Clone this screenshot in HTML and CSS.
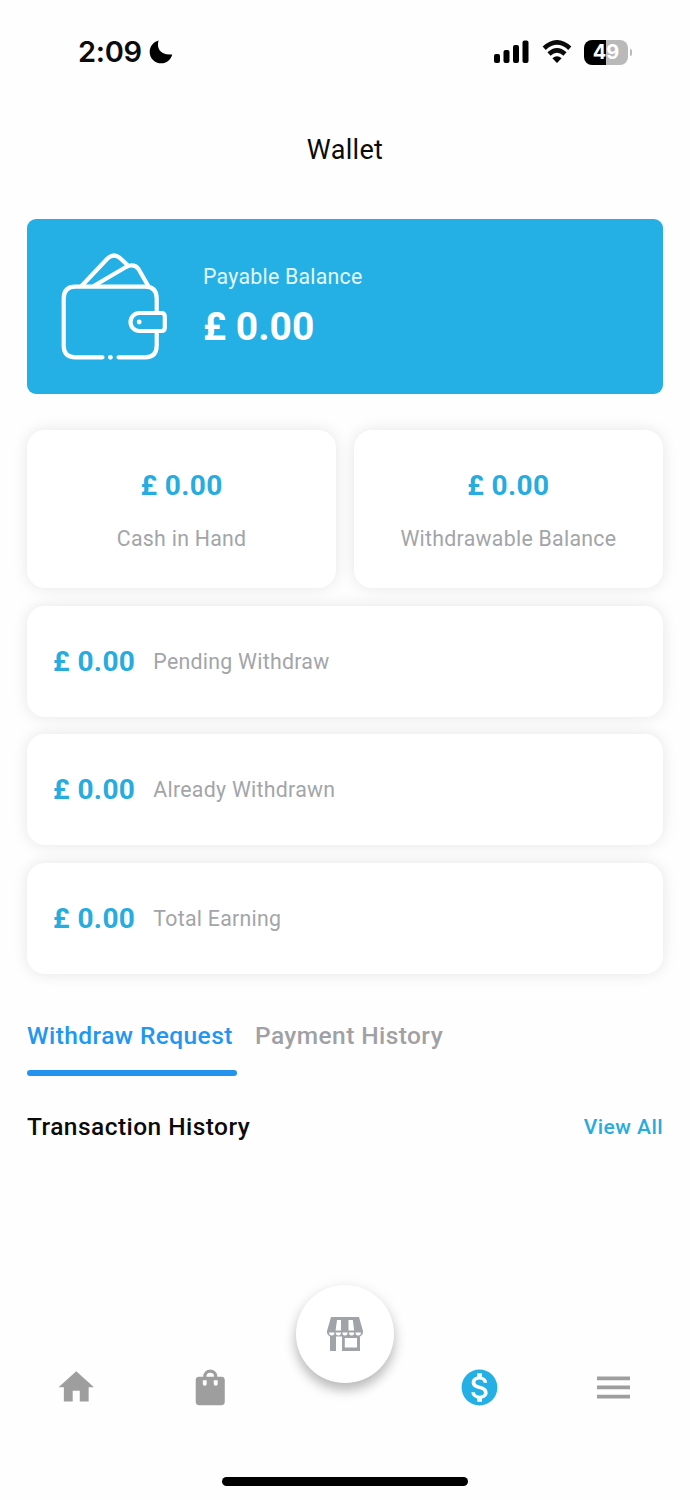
FILE: index.html
```html
<!DOCTYPE html>
<html lang="en">
<head>
<meta charset="utf-8">
<title>Wallet</title>
<link rel="stylesheet" href="styles.css">
</head>
<body>
<div class="screen">
  <header class="status">
    <div class="status-left">
      <span class="clock">2:09</span>
      <svg class="moon" viewBox="0 0 24 24" width="24" height="24"><path d="M9.600.6C7.400 7.600 10.500 15.600 23.300 14.500C21.600 20 17.500 23.300 12.400 23.300C5.800 23.300.7 18.200.7 11.900C.7 6.500 4.300 2 9.600.6z"/></svg>
    </div>
    <div class="status-right">
      <svg width="35" height="24" viewBox="0 0 35 24"><rect x="0" y="14" width="6" height="9" rx="2"/><rect x="9.500" y="10" width="6" height="13" rx="2"/><rect x="19" y="5" width="6" height="18" rx="2"/><rect x="28.500" y="0.500" width="6" height="22.500" rx="2"/></svg>
      <svg class="wifi" width="30" height="24" viewBox="0 0 30 24"><path d="M2.200 8.200Q15-3.400 27.800 8.200" class="arc"/><path d="M7 14Q15 6.600 23 14" class="arc"/><path d="M10.400 18.300Q15 14.400 19.600 18.300L15 23z"/></svg>
      <div class="battery"><span>49</span></div>
      <i class="nub"></i>
    </div>
  </header>

  <h1 class="title">Wallet</h1>

  <main class="content">
    <section class="hero">
      <svg class="wallet" width="110" height="114" viewBox="60 250 110 114">
        <path d="M102.500 357.300H75.500Q63.700 357.300 63.700 345.500V298.500Q63.700 286.700 75.500 286.700H145Q156.700 286.700 156.700 298.500V313M156.700 331V345.500Q156.700 357.300 145 357.300H118.500"/>
        <path d="M82 285.500L107.500 258.500Q114 252.500 120.500 258.500L127.500 265M94.500 285.500L126 267Q134 263 138.500 269L148 285.500"/>
        <path d="M139.500 313H161.500Q164.800 313 164.800 316.500V327.500Q164.800 331 161.500 331H139.500A9 9 0 0 1 139.500 313z"/>
        <circle cx="139.200" cy="322" r="2.400"/><circle cx="110.400" cy="357.300" r="2.400"/>
      </svg>
      <div class="hero-text">
        <div class="hero-label">Payable Balance</div>
        <div class="hero-value">£ 0.00</div>
      </div>
    </section>

    <section class="cards">
      <div class="card tile"><b class="amount">£ 0.00</b><span class="label">Cash in Hand</span></div>
      <div class="card tile"><b class="amount">£ 0.00</b><span class="label">Withdrawable Balance</span></div>
      <div class="card row"><b class="amount">£ 0.00</b><span class="label">Pending Withdraw</span></div>
      <div class="card row"><b class="amount">£ 0.00</b><span class="label">Already Withdrawn</span></div>
      <div class="card row"><b class="amount">£ 0.00</b><span class="label">Total Earning</span></div>
    </section>

    <nav class="tabs">
      <span class="tab active">Withdraw Request</span>
      <span class="tab">Payment History</span>
    </nav>

    <div class="history">
      <h2 class="history-title">Transaction History</h2>
      <a class="view-all">View All</a>
    </div>
  </main>

  <nav class="bottom">
    <div class="item"><svg width="42.500" height="42.500" viewBox="0 0 24 24"><path d="M10 20v-6h4v6h5v-8h3L12 3 2 12h3v8z"/></svg></div>
    <div class="item"><svg width="42.500" height="42.500" viewBox="0 0 24 24"><path fill-rule="evenodd" d="M5.700 6H8A4 4 0 0 1 16 6H18.300Q20.200 6 20.200 7.900V20.200Q20.200 22.100 18.300 22.100H5.700Q3.800 22.100 3.800 20.200V7.900Q3.800 6 5.700 6zM9.800 6H14.200A2.200 2.200 0 0 0 9.800 6zM7.800 8V10.200Q7.800 11.200 8.900 11.200T10 10.200V8zM14 8V10.200Q14 11.200 15.100 11.200T16.200 10.200V8z"/></svg></div>
    <div class="item"><div class="fab"><svg width="36" height="36" viewBox="0 0 36 36">
      <path fill-rule="evenodd" d="M4 1H32L36 15V17Q35 20 33 20.500V35H15V20.500H9V35H3V20.500Q1 20 0 17V15zM10 4L8.600 14.500H14V4zM21.500 4V14.500H27.200L25.800 4zM17.800 22V31.500H30V22z"/>
      <path class="scallop" d="M2 16.500H7.500Q7.500 19.500 4.800 19.500T2 16.500zM8.800 16.500H14Q14 19.500 11.400 19.500T8.800 16.500zM15.400 16.500H20.600Q20.600 19.500 18 19.500T15.400 16.500zM22 16.500H27.200Q27.200 19.500 24.600 19.500T22 16.500zM28.500 16.500H34Q34 19.500 31.200 19.500T28.500 16.500z"/></svg></div></div>
    <div class="item current"><svg width="43" height="43" viewBox="0 0 24 24"><path d="M12 2C6.480 2 2 6.480 2 12s4.480 10 10 10 10-4.480 10-10S17.520 2 12 2zm1.410 16.090V20h-2.670v-1.930c-1.710-.36-3.160-1.460-3.270-3.400h1.960c.1 1.050.82 1.870 2.650 1.870 1.960 0 2.400-.98 2.400-1.590 0-.83-.44-1.610-2.670-2.140-2.480-.6-4.180-1.620-4.180-3.670 0-1.720 1.390-2.840 3.110-3.210V4h2.670v1.950c1.860.45 2.790 1.860 2.850 3.390H14.300c-.05-1.110-.64-1.870-2.220-1.870-1.500 0-2.400.68-2.400 1.640 0 .84.65 1.390 2.670 1.910s4.180 1.390 4.180 3.910c-.01 1.830-1.380 2.830-3.120 3.160z"/></svg></div>
    <div class="item"><svg width="33" height="23" viewBox="0 0 33 23"><path d="M0 .5h33v3.700H0zM0 9.600h33v3.700H0zM0 18.700h33v3.700H0z"/></svg></div>
  </nav>
  <div class="home-bar"></div>
</div>
</body>
</html>
```
FILE: styles.css
```css
* { box-sizing: border-box; }
body { margin: 0; background: #fefefe; font-family: Roboto, "Liberation Sans", sans-serif; color: #0b0b0b; }
svg { display: block; flex: none; }
.screen { width: 690px; height: 1500px; display: flex; flex-direction: column; overflow: hidden; }

.status { height: 104px; padding: 0 58px 0 78px; display: flex; align-items: center; justify-content: space-between; }
.status-left, .status-right { display: flex; align-items: center; }
.status-left { gap: 7px; }
.clock { font: 600 29px/38px Inter, sans-serif; letter-spacing: -0.3px; }
.wifi { margin: 0 12px 0 13px; }
.arc { fill: none; stroke: #0b0b0b; stroke-width: 4.6; }
.battery { width: 44px; height: 25px; border-radius: 8px; background: linear-gradient(90deg, #000 50%, #b9b9b9 50%); color: #fff; text-align: center; font: 700 20px/25px Inter, sans-serif; }
.nub { width: 2px; height: 7px; margin-left: 2px; border-radius: 0 3px 3px 0; background: #b9b9b9; }

.title { margin: 0; height: 90px; font-size: 27px; font-weight: 400; line-height: 92px; text-align: center; letter-spacing: 0.3px; }
.content { padding: 25px 27px 0; }

.hero { height: 175px; padding-left: 33px; display: flex; align-items: center; gap: 33px; border-radius: 9px; background: #24b0e5; color: #fff; }
.wallet { fill: none; stroke: #fff; stroke-width: 4.2; stroke-linecap: round; stroke-linejoin: round; }
.wallet circle { fill: #fff; stroke: none; }
.hero-text { padding-bottom: 2px; }
.hero-label { font-size: 21.300px; line-height: 30px; letter-spacing: 0.25px; color: #e4f7fe; }
.hero-value { margin-top: 12px; font-size: 39px; font-weight: 700; line-height: 46px; }

.cards { margin-top: 36px; display: grid; grid-template-columns: 1fr 1fr; gap: 17.500px; }
.card { display: flex; border-radius: 18px; background: #fff; box-shadow: 0 0 15px rgba(0, 0, 0, 0.1); }
.tile { height: 158px; padding-top: 39px; flex-direction: column; align-items: center; gap: 21px; }
.row { grid-column: 1 / -1; height: 111px; padding: 1px 0 0 26px; align-items: center; gap: 18px; }
.amount { font-size: 28px; font-weight: 700; line-height: 34px; letter-spacing: 0.4px; color: #27acdf; }
.label { font-size: 21.300px; line-height: 30px; letter-spacing: 0.28px; color: #a2a5a9; }

.tabs { margin-top: 42px; display: flex; gap: 18px; }
.tab { height: 60px; font-size: 24.500px; font-weight: 500; line-height: 40px; letter-spacing: 0.42px; color: #9fa1a5; white-space: nowrap; }
.active { width: 210px; color: #2196f3; }
.active::after { content: ""; display: block; height: 5.500px; margin-top: 14.500px; border-radius: 3px; background: #2493ed; }
.history { margin-top: 31px; height: 40px; display: flex; align-items: center; justify-content: space-between; }
.history-title { margin: 0; font-size: 24.500px; font-weight: 500; letter-spacing: 0.45px; }
.view-all { font-size: 21px; font-weight: 500; letter-spacing: 0.45px; color: #27acdf; }

.bottom { margin-top: auto; height: 134px; padding: 0 9px; display: grid; grid-template-columns: repeat(5, 1fr); align-items: center; fill: #9e9e9e; }
.item { display: flex; justify-content: center; }
.current { fill: #24b0e5; }
.fab { width: 98px; height: 98px; margin-bottom: 108px; display: flex; align-items: center; justify-content: center; border-radius: 50%; background: #fff; fill: #a0a4a8; box-shadow: 0 7px 12px rgba(0, 0, 0, 0.25), 0 2px 18px rgba(0, 0, 0, 0.05); }
.scallop { fill: #fff; }
.home-bar { width: 246px; height: 9px; margin: 58px auto 14.500px; border-radius: 5px; background: #000; }
```
